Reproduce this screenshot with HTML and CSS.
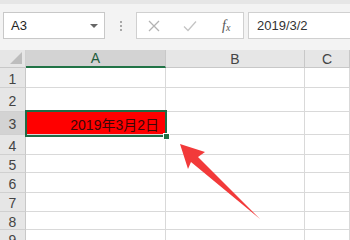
FILE: index.html
```html
<!DOCTYPE html>
<html>
<head>
<meta charset="utf-8">
<link rel="stylesheet" href="styles.css">
</head>
<body>
<div class="app">
  <div class="toolbar">
    <div class="namebox">
      <span class="ref">A3</span>
      <span class="caret"></span>
    </div>
    <div class="grip"><i></i><i></i><i></i></div>
    <div class="btnbox">
      <svg class="ico" width="14" height="14" viewBox="0 0 14 14"><path d="M2 2 L12 12 M12 2 L2 12" stroke="#b3b3b3" stroke-width="1.3" fill="none"/></svg>
      <svg class="ico" width="16" height="14" viewBox="0 0 16 14"><path d="M2 7.5 L6 11.5 L14 2.5" stroke="#c4c4c4" stroke-width="1.3" fill="none"/></svg>
      <span class="fx">f<sub>x</sub></span>
    </div>
    <div class="formula">2019/3/2</div>
  </div>
  <div class="sheet">
    <div class="grid">
      <div class="corner"><span class="tri"></span></div>
      <div class="colhead sel">A</div>
      <div class="colhead">B</div>
      <div class="colhead">C</div>

      <div class="rowhead">1</div><div class="cell"></div><div class="cell"></div><div class="cell"></div>
      <div class="rowhead">2</div><div class="cell"></div><div class="cell"></div><div class="cell"></div>
      <div class="rowhead sel">3</div><div class="cell red">2019年3月2日</div><div class="cell"></div><div class="cell"></div>
      <div class="rowhead">4</div><div class="cell"></div><div class="cell"></div><div class="cell"></div>
      <div class="rowhead">5</div><div class="cell"></div><div class="cell"></div><div class="cell"></div>
      <div class="rowhead">6</div><div class="cell"></div><div class="cell"></div><div class="cell"></div>
      <div class="rowhead">7</div><div class="cell"></div><div class="cell"></div><div class="cell"></div>
      <div class="rowhead">8</div><div class="cell"></div><div class="cell"></div><div class="cell"></div>
      <div class="rowhead">9</div><div class="cell"></div><div class="cell"></div><div class="cell"></div>
    </div>
    <div class="selection"><span class="handle"></span></div>
    <svg class="arrow" width="350" height="240" viewBox="0 0 350 240">
      <polygon points="180,144 205,152 198,157 260,219 191,162 188,169" fill="#f23a3a"/>
    </svg>
  </div>
</div>
</body>
</html>
```
FILE: styles.css
```css
* { box-sizing: border-box; }
html, body { margin: 0; padding: 0; }
body {
  width: 350px;
  height: 240px;
  overflow: hidden;
  background: #ffffff;
  font-family: "Liberation Sans", "Noto Sans CJK SC", sans-serif;
}
.app { width: 350px; height: 240px; position: relative; }

.toolbar {
  height: 50px;
  background: #f3f3f3;
  border-top: 4px solid #e6e6e6;
  display: flex;
  align-items: flex-start;
  padding-top: 8px;
  padding-left: 3px;
}
.namebox {
  width: 102px;
  height: 27px;
  background: #fff;
  border: 1px solid #c8c8c8;
  display: flex;
  align-items: center;
  justify-content: space-between;
  padding: 0 6px 0 7px;
}
.ref { font-size: 13px; color: #222; }
.caret {
  width: 0; height: 0;
  border-left: 4px solid transparent;
  border-right: 4px solid transparent;
  border-top: 4px solid #666;
}
.grip {
  width: 31px;
  height: 27px;
  display: flex;
  flex-direction: column;
  align-items: center;
  justify-content: center;
  gap: 2px;
}
.grip i {
  display: block;
  width: 2px; height: 2px;
  background: #a8a8a8;
}
.btnbox {
  width: 108px;
  height: 27px;
  background: #fff;
  border: 1px solid #d0d0d0;
  display: flex;
  align-items: center;
  padding-left: 10px;
  gap: 21px;
}
.fx {
  font-family: "Liberation Serif", serif;
  font-style: italic;
  font-size: 14px;
  color: #555;
  margin-left: 3px;
}
.fx sub { font-size: 10px; vertical-align: -1px; }
.formula {
  margin-left: 4px;
  flex: 1;
  height: 27px;
  background: #fff;
  border: 1px solid #d0d0d0;
  border-right: none;
  font-size: 13px;
  color: #333;
  display: flex;
  align-items: center;
  padding-left: 8px;
}

.sheet { position: relative; height: 190px; }
.grid {
  display: grid;
  grid-template-columns: 26px 140px 139px 45px;
  grid-template-rows: 18px 20px 24px 23px 20px 18px 20px 19px 18px 19px;
}
.corner {
  background: #e6e6e6;
  border-right: 1px solid #d0d0d0;
  border-bottom: 1px solid #c8c8c8;
  position: relative;
}
.tri {
  position: absolute;
  right: 3px; bottom: 3px;
  width: 0; height: 0;
  border-left: 12px solid transparent;
  border-bottom: 12px solid #bdbdbd;
}
.colhead {
  background: #e6e6e6;
  border-right: 1px solid #c8c8c8;
  border-bottom: 1px solid #c8c8c8;
  font-size: 14px;
  color: #444;
  display: flex;
  align-items: center;
  justify-content: center;
}
.colhead.sel {
  background: #d3d3d3;
  border-bottom: 2px solid #217346;
  color: #1f5c3c;
}
.rowhead {
  background: #e6e6e6;
  border-right: 1px solid #c8c8c8;
  border-bottom: 1px solid #d0d0d0;
  font-size: 14px;
  color: #444;
  display: flex;
  align-items: center;
  justify-content: center;
  padding-top: 2px;
}
.rowhead.sel { background: #d3d3d3; }
.cell {
  border-right: 1px solid #d9d9d9;
  border-bottom: 1px solid #d9d9d9;
}
.cell.red {
  background: #ff0000;
  color: #3a0808;
  font-size: 14px;
  display: flex;
  align-items: center;
  justify-content: flex-end;
  padding-right: 6px;
  padding-top: 2px;
}
.selection {
  position: absolute;
  left: 25px;
  top: 60px;
  width: 142px;
  height: 27px;
  border: 2px solid #1f6b45;
}
.handle {
  position: absolute;
  right: -5px;
  bottom: -5px;
  width: 7px;
  height: 7px;
  background: #217346;
  border: 1px solid #fff;
}
.arrow {
  position: absolute;
  left: 0;
  top: -50px;
}
```
